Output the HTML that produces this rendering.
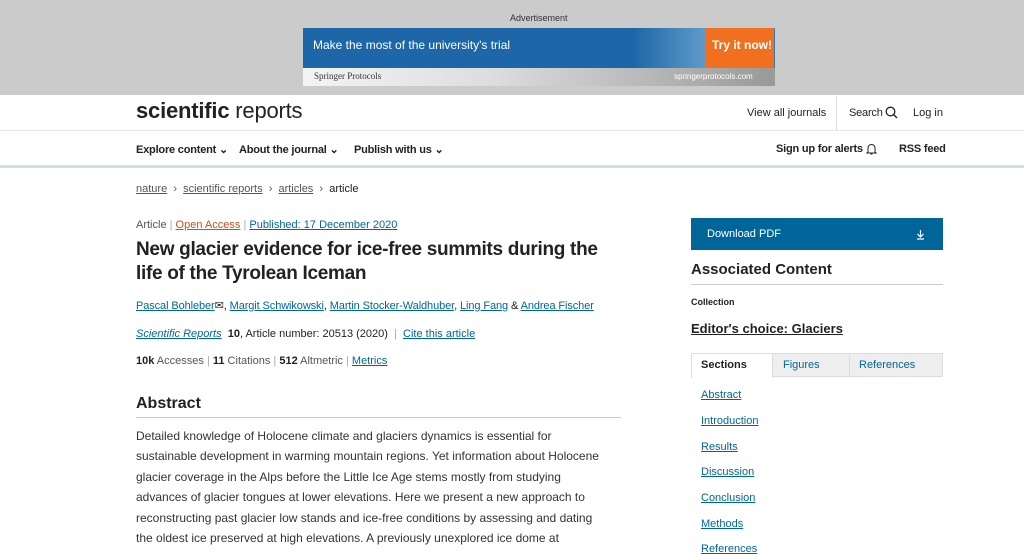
<!DOCTYPE html>
<html><head><meta charset="utf-8"><style>
*{margin:0;padding:0;box-sizing:border-box}
body{width:1024px;height:553px;overflow:hidden;background:#fff;font-family:"Liberation Sans",Arial,sans-serif;color:#222;position:relative}
.a{position:absolute;white-space:nowrap}
.ad{position:absolute;left:0;top:0;width:1024px;height:95px;background:#cbcbcb}
a,.l{color:#069;text-decoration:underline}
.nav{font-size:11px;font-weight:bold;color:#222;letter-spacing:-0.2px}
.sec a{position:absolute;left:701px;font-size:11px;color:#069}
</style></head><body>
<div class="ad"></div>
<div class="a" style="left:510px;top:13px;font-size:9px;color:#333">Advertisement</div>
<div class="a" style="left:303px;top:28px;width:472px;height:41px;background:linear-gradient(90deg,#1d67a8 0%,#1d67a8 70%,#5f9ac8 85%,#3a78b0 100%)"></div>
<div class="a" style="left:313px;top:38px;font-size:12px;color:#fff">Make the most of the university's trial</div>
<div class="a" style="left:706px;top:28px;width:68px;height:40px;background:#f07020;color:#fff;font-weight:bold;font-size:12px;padding:10px 0 0 6px">Try it now!</div>
<div class="a" style="left:303px;top:68px;width:472px;height:18px;background:linear-gradient(90deg,#f4f4f4 0%,#ddd 40%,#999 100%)"></div>
<div class="a" style="left:314px;top:71px;font-size:9px;color:#333;font-family:'Liberation Serif',serif">Springer Protocols</div>
<div class="a" style="left:674px;top:72px;font-size:8px;color:#fff">springerprotocols.com</div>

<div class="a" style="left:136px;top:98px;font-size:22px;color:#222;letter-spacing:-0.2px"><b>scientific</b> reports</div>
<div class="a" style="left:747px;top:107px;font-size:11px">View all journals</div>
<div class="a" style="left:836px;top:96px;width:1px;height:34px;background:#ddd"></div>
<div class="a" style="left:849px;top:107px;font-size:11px;letter-spacing:-0.2px">Search</div>
<svg class="a" style="left:885px;top:106px" width="13" height="13" viewBox="0 0 13 13"><circle cx="5.5" cy="5.5" r="4.3" fill="none" stroke="#222" stroke-width="1.3"/><path d="M8.6 8.6L12 12" stroke="#222" stroke-width="1.4"/></svg>
<div class="a" style="left:913px;top:107px;font-size:11px">Log in</div>
<div class="a" style="left:0;top:130px;width:1024px;height:1px;background:#e5e5e5"></div>
<div class="a nav" style="left:136px;top:143px">Explore content ⌄</div>
<div class="a nav" style="left:239px;top:143px">About the journal ⌄</div>
<div class="a nav" style="left:354px;top:143px">Publish with us ⌄</div>
<div class="a nav" style="left:776px;top:143px">Sign up for alerts</div>
<svg class="a" style="left:866px;top:143px" width="11" height="12" viewBox="0 0 11 12"><path d="M2 9V5a3.5 3.5 0 0 1 7 0v4l1 1H1z M4.5 11h2" fill="none" stroke="#222" stroke-width="1"/></svg>
<div class="a nav" style="left:899px;top:143px">RSS feed</div>
<div class="a" style="left:0;top:165px;width:1024px;height:3px;background:#d2dfe6"></div>

<div class="a" style="left:136px;top:183px;font-size:11px;color:#555"><span class="l" style="color:#555">nature</span> &nbsp;›&nbsp; <span class="l" style="color:#555">scientific reports</span> &nbsp;›&nbsp; <span class="l" style="color:#555">articles</span> &nbsp;›&nbsp; <span style="color:#222">article</span></div>
<div class="a" style="left:136px;top:219px;font-size:11px;color:#555">Article <span style="color:#aaa">|</span> <span class="l" style="color:#c4501e">Open Access</span> <span style="color:#aaa">|</span> <span class="l">Published: 17 December 2020</span></div>
<div class="a" style="left:136px;top:238px;font-size:19px;font-weight:bold;line-height:24px;color:#222;letter-spacing:-0.3px">New glacier evidence for ice-free summits during the<br>life of the Tyrolean Iceman</div>
<div class="a" style="left:136px;top:299px;font-size:11px;letter-spacing:-0.1px"><span class="l">Pascal Bohleber</span>✉, <span class="l">Margit Schwikowski</span>, <span class="l">Martin Stocker-Waldhuber</span>, <span class="l">Ling Fang</span> &amp; <span class="l">Andrea Fischer</span></div>
<div class="a" style="left:136px;top:328px;font-size:11px"><i class="l">Scientific Reports</i> &nbsp;<b>10</b>, Article number: 20513 (2020) &nbsp;<span style="color:#aaa">|</span>&nbsp; <span class="l">Cite this article</span></div>
<div class="a" style="left:136px;top:355px;font-size:11px;color:#555"><b style="color:#222">10k</b> Accesses <span style="color:#aaa">|</span> <b style="color:#222">11</b> Citations <span style="color:#aaa">|</span> <b style="color:#222">512</b> Altmetric <span style="color:#aaa">|</span> <span class="l">Metrics</span></div>
<div class="a" style="left:136px;top:395px;font-size:16px;font-weight:bold">Abstract</div>
<div class="a" style="left:136px;top:417px;width:485px;height:1px;background:#ccc"></div>
<div class="a" style="left:136px;top:426px;font-size:12px;line-height:20.4px;color:#333">Detailed knowledge of Holocene climate and glaciers dynamics is essential for<br>sustainable development in warming mountain regions. Yet information about Holocene<br>glacier coverage in the Alps before the Little Ice Age stems mostly from studying<br>advances of glacier tongues at lower elevations. Here we present a new approach to<br>reconstructing past glacier low stands and ice-free conditions by assessing and dating<br>the oldest ice preserved at high elevations. A previously unexplored ice dome at</div>

<div class="a" style="left:691px;top:218px;width:252px;height:32px;background:#006699"></div>
<div class="a" style="left:707px;top:228px;font-size:11px;color:#fff">Download PDF</div>
<svg class="a" style="left:916px;top:229px" width="9" height="11" viewBox="0 0 9 11"><path d="M4.5 1v7M1.5 5l3 3 3-3M1 10h7" fill="none" stroke="#fff" stroke-width="1.2"/></svg>
<div class="a" style="left:691px;top:261px;font-size:15px;font-weight:bold">Associated Content</div>
<div class="a" style="left:691px;top:284px;width:252px;height:1px;background:#ccc"></div>
<div class="a" style="left:691px;top:297px;font-size:9px;font-weight:bold">Collection</div>
<div class="a" style="left:691px;top:321px;font-size:13px;font-weight:bold;text-decoration:underline">Editor's choice: Glaciers</div>
<div class="a" style="left:691px;top:353px;width:252px;height:24px;background:#eee;border:1px solid #ddd"></div>
<div class="a" style="left:691px;top:353px;width:82px;height:25px;background:#fff;border:1px solid #ddd;border-bottom:none"></div>
<div class="a" style="left:849px;top:354px;width:1px;height:22px;background:#ddd"></div>
<div class="a" style="left:701px;top:359px;font-size:11px;font-weight:bold">Sections</div>
<div class="a" style="left:783px;top:359px;font-size:11px;color:#069">Figures</div>
<div class="a" style="left:859px;top:359px;font-size:11px;color:#069">References</div>
<div class="sec">
<a class="a" style="top:389px">Abstract</a>
<a class="a" style="top:415px">Introduction</a>
<a class="a" style="top:441px">Results</a>
<a class="a" style="top:466px">Discussion</a>
<a class="a" style="top:492px">Conclusion</a>
<a class="a" style="top:518px">Methods</a>
<a class="a" style="top:543px">References</a>
</div>
</body></html>
